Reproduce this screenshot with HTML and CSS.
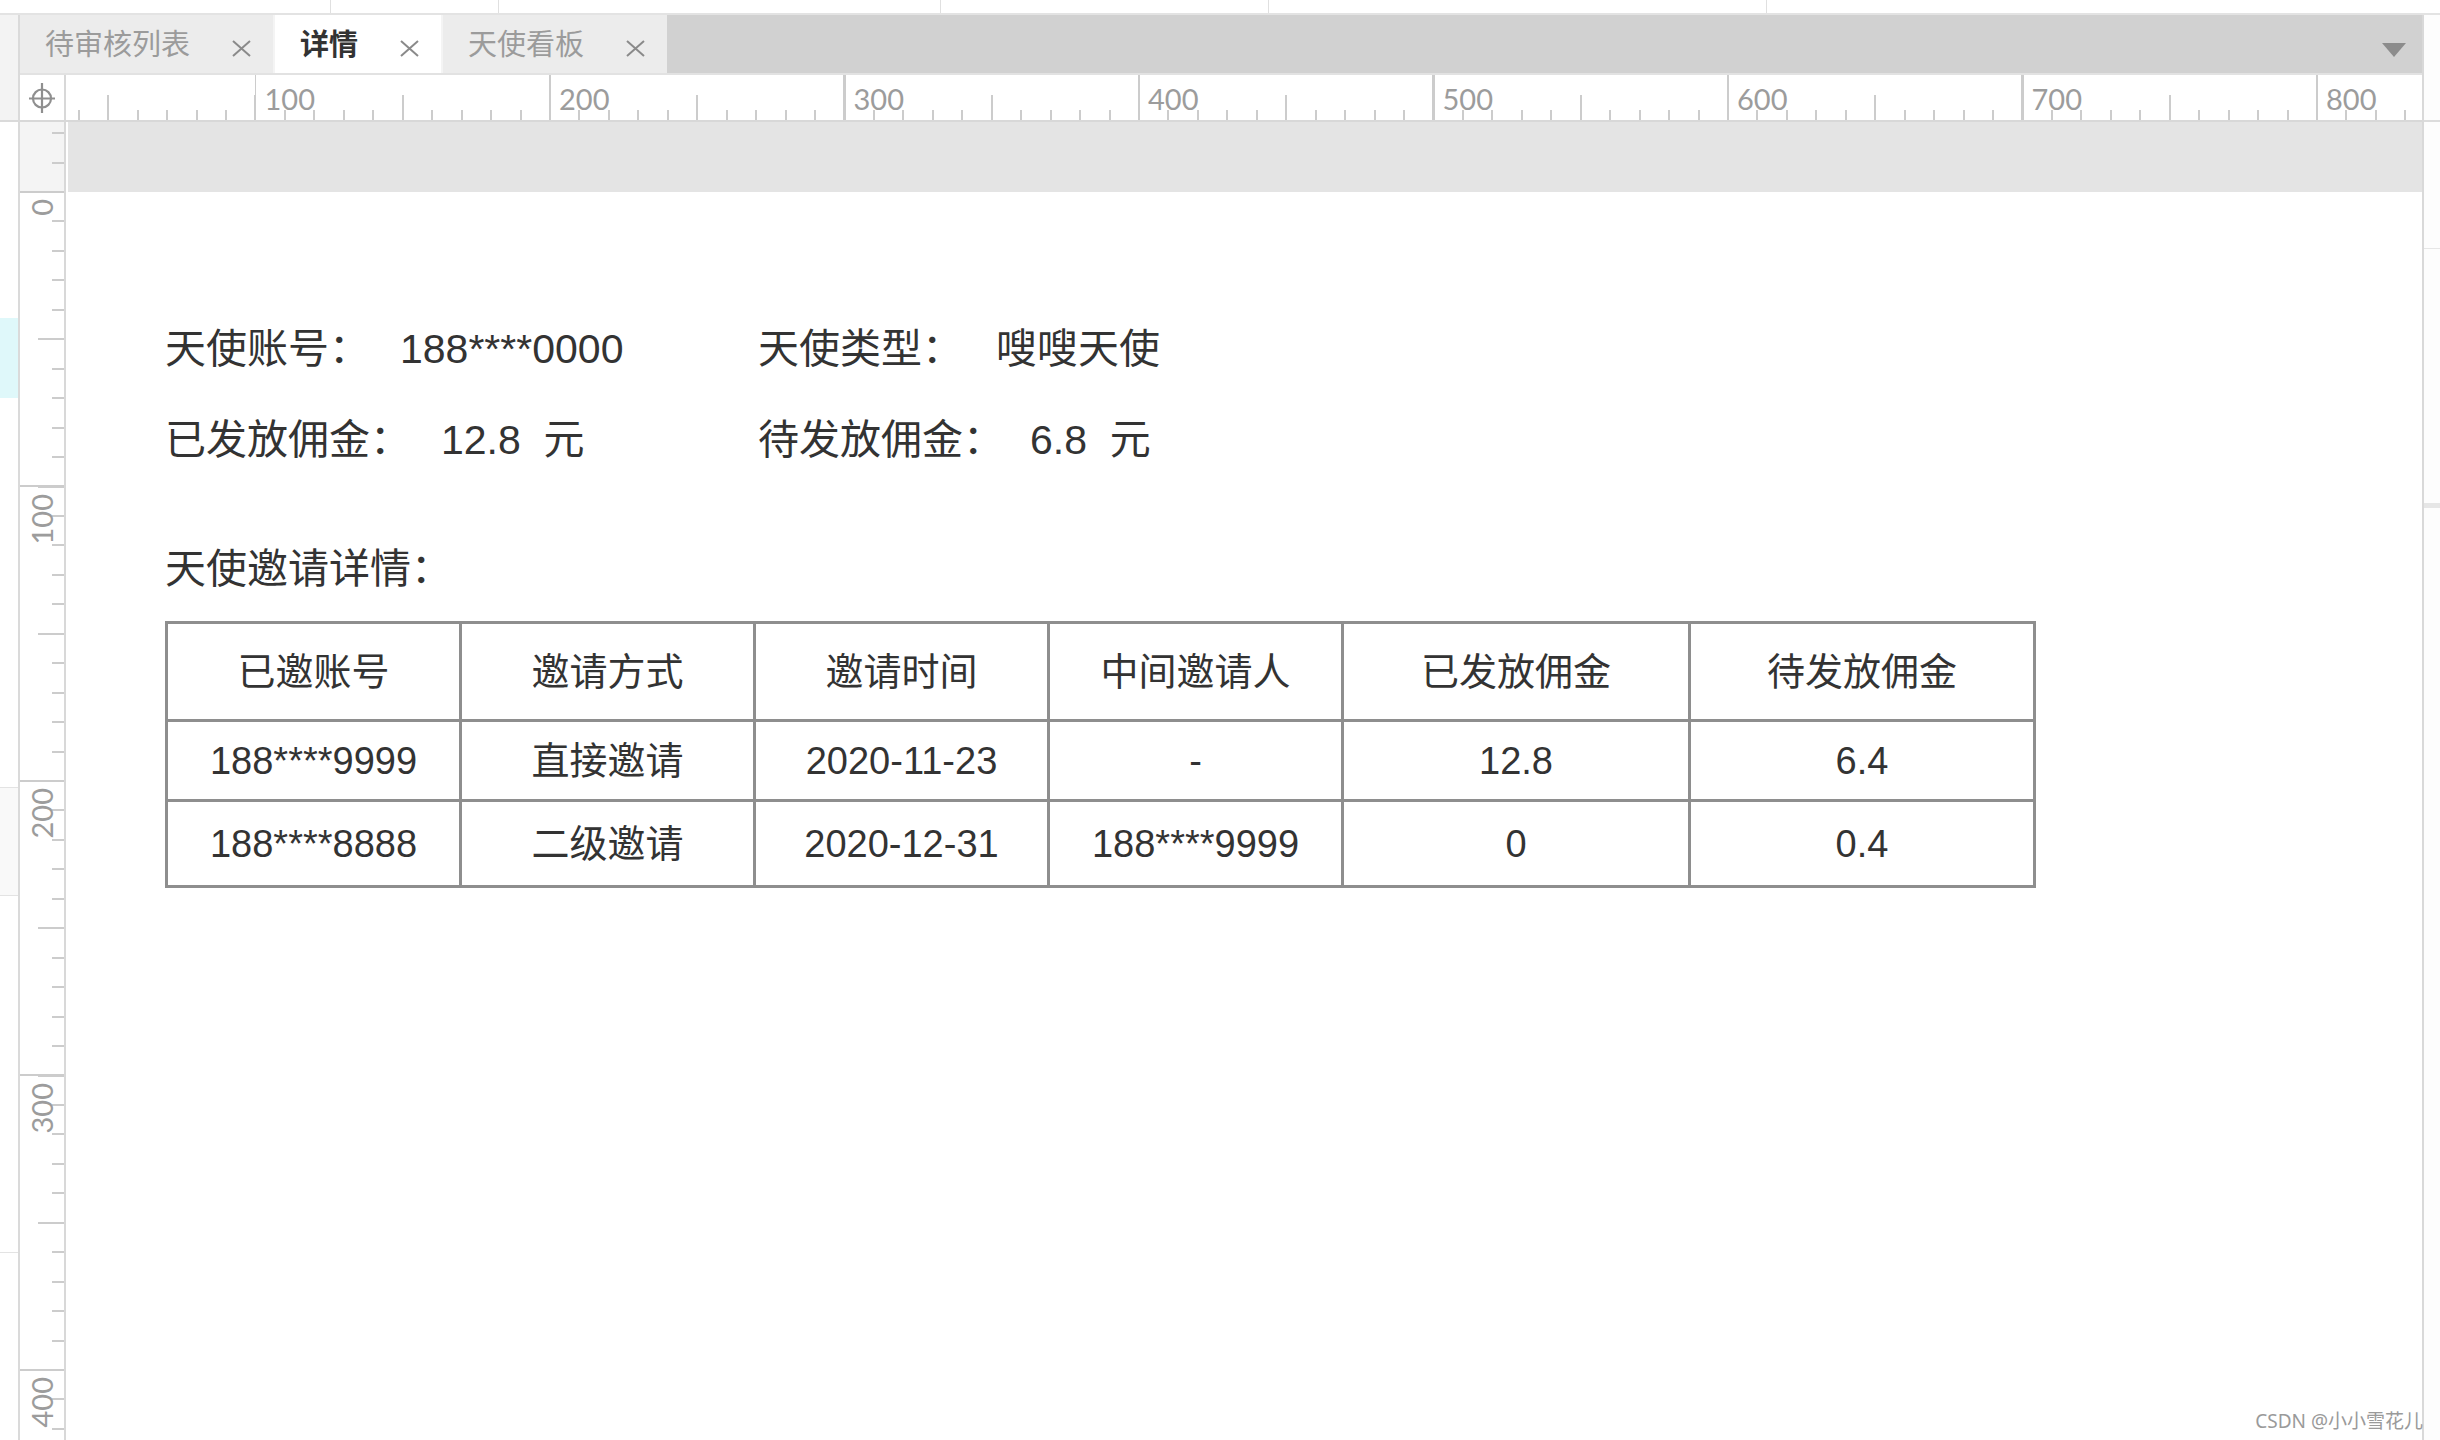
FILE: index.html
```html
<!DOCTYPE html>
<html lang="zh-CN">
<head>
<meta charset="utf-8">
<title>详情</title>
<link rel="stylesheet" href="styles.css">
</head>
<body>
<div class="app">
  <div class="topstrip">
    <span class="seg s1"></span><span class="seg s2"></span><span class="seg s3"></span><span class="seg s4"></span><span class="seg s5"></span>
  </div>
  <div class="main">
    <div class="leftedge">
      <div class="le-top"></div>
      <div class="le-cyan"></div>
      <div class="le-box"></div>
      <div class="le-line"></div>
    </div>
    <div class="center">
      <div class="tabbar">
        <div class="tab">
          <span class="tab-title">待审核列表</span>
          <svg class="tab-close" viewBox="0 0 19 17"><path d="M1 1L18 16M18 1L1 16"/></svg>
        </div>
        <div class="tab active">
          <span class="tab-title">详情</span>
          <svg class="tab-close" viewBox="0 0 19 17"><path d="M1 1L18 16M18 1L1 16"/></svg>
        </div>
        <div class="tab">
          <span class="tab-title">天使看板</span>
          <svg class="tab-close" viewBox="0 0 19 17"><path d="M1 1L18 16M18 1L1 16"/></svg>
        </div>
        <span class="tab-menu"></span>
      </div>
      <div class="rulerrow">
        <div class="corner">
          <svg class="crosshair" viewBox="0 0 44 45">
            <circle cx="22" cy="23.5" r="9"/>
            <path d="M9 23.5H35M22 8V38"/>
          </svg>
        </div>
        <div class="hruler">
          <span class="hl">100</span><span class="hl">200</span><span class="hl">300</span><span class="hl">400</span><span class="hl">500</span><span class="hl">600</span><span class="hl">700</span><span class="hl">800</span>
        </div>
      </div>
      <div class="canvasrow">
        <div class="vruler">
          <div class="vl"><span>0</span></div>
          <div class="vl"><span>100</span></div>
          <div class="vl"><span>200</span></div>
          <div class="vl"><span>300</span></div>
          <div class="vl"><span>400</span></div>
        </div>
        <div class="canvas">
          <div class="band"></div>
          <div class="content">
            <div class="info">
              <div class="field"><span class="label">天使账号：</span><span class="value">188****0000</span></div>
              <div class="field"><span class="label">天使类型：</span><span class="value">嗖嗖天使</span></div>
              <div class="field"><span class="label">已发放佣金：</span><span class="value">12.8  元</span></div>
              <div class="field"><span class="label">待发放佣金：</span><span class="value">6.8  元</span></div>
            </div>
            <div class="section-title">天使邀请详情：</div>
            <table class="invite">
              <colgroup>
                <col class="c1"><col class="c2"><col class="c3"><col class="c4"><col class="c5"><col class="c6">
              </colgroup>
              <tr class="head">
                <td>已邀账号</td><td>邀请方式</td><td>邀请时间</td><td>中间邀请人</td><td>已发放佣金</td><td>待发放佣金</td>
              </tr>
              <tr class="r1">
                <td>188****9999</td><td>直接邀请</td><td>2020-11-23</td><td>-</td><td>12.8</td><td>6.4</td>
              </tr>
              <tr class="r2">
                <td>188****8888</td><td>二级邀请</td><td>2020-12-31</td><td>188****9999</td><td>0</td><td>0.4</td>
              </tr>
            </table>
          </div>
        </div>
      </div>
    </div>
    <div class="rightedge">
      <div class="re-a"></div>
      <div class="re-b"></div>
      <div class="re-c"></div>
    </div>
  </div>
  <div class="watermark">CSDN @小小雪花儿</div>
</div>
</body>
</html>
```
FILE: styles.css
```css
* { box-sizing: border-box; }
html, body { margin: 0; padding: 0; }
body {
  width: 2440px;
  height: 1440px;
  overflow: hidden;
  background: #ffffff;
  font-family: "Liberation Sans", "Noto Sans CJK SC", sans-serif;
  color: #333333;
}
.app {
  position: relative;
  width: 2440px;
  height: 1440px;
  display: flex;
  flex-direction: column;
}

/* top strip */
.topstrip {
  height: 15px;
  flex: none;
  display: flex;
  border-bottom: 2px solid #e3e3e3;
  background: #ffffff;
}
.seg { display: block; height: 100%; border-right: 1px solid #e0e0e0; }
.s1 { width: 331px; }
.s2 { width: 168px; }
.s3 { width: 442px; }
.s4 { width: 328px; }
.s5 { width: 498px; }

.main {
  flex: 1;
  display: flex;
  min-height: 0;
}

/* left edge */
.leftedge {
  width: 20px;
  flex: none;
  border-right: 2px solid #dadada;
  display: flex;
  flex-direction: column;
}
.le-top { height: 107px; background: #f3f3f3; border-bottom: 2px solid #dadada; }
.le-cyan { margin-top: 196px; height: 80px; background: #dff8fa; }
.le-box { margin-top: 389px; height: 109px; background: #f9f9f9; border-top: 1px solid #e3e3e3; border-bottom: 1px solid #e3e3e3; }
.le-line { margin-top: 356px; height: 1px; background: #e3e3e3; }

/* right edge */
.rightedge {
  width: 18px;
  flex: none;
  border-left: 2px solid #d9d9d9;
  display: flex;
  flex-direction: column;
  background: #fdfdfd;
}
.re-a { height: 107px; border-bottom: 2px solid #dcdcdc; }
.re-b { height: 127px; border-bottom: 1px solid #e6e6e6; }
.re-c { margin-top: 254px; height: 5px; background: #e6e6e6; }

.center {
  flex: 1;
  min-width: 0;
  display: flex;
  flex-direction: column;
}

/* tabs */
.tabbar {
  height: 58px;
  flex: none;
  background: #d1d1d1;
  display: flex;
  align-items: stretch;
}
.tab {
  display: flex;
  align-items: center;
  gap: 42px;
  padding: 0 22px 0 25px;
  background: #ececec;
  font-family: "Noto Sans CJK SC", sans-serif;
}
.tab + .tab { border-left: 2px solid #f4f4f4; }
.tab.active { background: #ffffff; }
.tab-title {
  font-size: 29px;
  line-height: 1;
  color: #9b9b9b;
  margin-top: -4px;
}
.tab.active .tab-title { color: #333333; font-weight: 700; }
.tab-close {
  width: 19px;
  height: 17px;
  margin-top: 8px;
  fill: none;
  stroke: #8a8a8a;
  stroke-width: 2;
}
.tab-menu {
  margin-left: auto;
  margin-right: 16px;
  margin-top: 28px;
  align-self: flex-start;
  width: 0;
  height: 0;
  border-left: 12.5px solid transparent;
  border-right: 12.5px solid transparent;
  border-top: 14px solid #8c8c8c;
}

/* rulers */
.rulerrow {
  height: 49px;
  flex: none;
  display: flex;
  border-top: 2px solid #e2e2e2;
  border-bottom: 2px solid #d8d8d8;
  background: #ffffff;
}
.corner {
  width: 46px;
  flex: none;
  border-right: 2px solid #d8d8d8;
}
.crosshair {
  display: block;
  width: 44px;
  height: 45px;
  fill: none;
  stroke: #8f8f8f;
  stroke-width: 2.2;
}
.hruler {
  flex: 1;
  min-width: 0;
  overflow: hidden;
  display: flex;
  padding-left: 188.5px;
  background-image:
    repeating-linear-gradient(to right, #cccccc 188.5px, #cccccc 190.5px, transparent 190.5px, transparent 483px),
    repeating-linear-gradient(to right, #cccccc 41.25px, #cccccc 43.25px, transparent 43.25px, transparent 188.5px),
    repeating-linear-gradient(to right, #cccccc 11.8px, #cccccc 13.8px, transparent 13.8px, transparent 41.25px);
  background-size: 100% 100%, 100% 25px, 100% 10px;
  background-position: left top, left bottom, left bottom;
  background-repeat: no-repeat;
}
.hl {
  flex: none;
  width: 294.5px;
  padding: 9px 0 0 10px;
  font-family: "Lato", sans-serif;
  font-size: 29px;
  line-height: 29px;
  color: #9c9c9c;
}

.canvasrow {
  flex: 1;
  min-height: 0;
  display: flex;
}
.vruler {
  width: 46px;
  flex: none;
  border-right: 2px solid #d8d8d8;
  overflow: hidden;
  padding-top: 77px;
  background-image:
    repeating-linear-gradient(to bottom, #cccccc 69px, #cccccc 71px, transparent 71px, transparent 363.5px),
    repeating-linear-gradient(to bottom, #cccccc 69px, #cccccc 71px, transparent 71px, transparent 216.25px),
    repeating-linear-gradient(to bottom, #cccccc 10.1px, #cccccc 12.1px, transparent 12.1px, transparent 39.55px),
    linear-gradient(#f4f4f4, #f4f4f4);
  background-size: 100% 100%, 26px 100%, 12px 100%, 100% 70px;
  background-position: left top, right top, right top, left top;
  background-repeat: no-repeat;
}
.vl {
  height: 294.5px;
  flex: none;
}
.vl span {
  display: inline-block;
  margin-left: 8px;
  writing-mode: vertical-rl;
  transform: rotate(180deg);
  font-family: "Lato", sans-serif;
  font-size: 29px;
  line-height: 28px;
  color: #9c9c9c;
}

.canvas {
  flex: 1;
  min-width: 0;
  display: flex;
  flex-direction: column;
  background: #ffffff;
}
.band {
  height: 70px;
  flex: none;
  margin-left: 2px;
  background: #e4e4e4;
}
.content {
  padding: 132px 0 0 99px;
}
.info {
  display: grid;
  grid-template-columns: 593px auto;
  row-gap: 41px;
  font-size: 41px;
  line-height: 50px;
  color: #333333;
}
.field {
  display: flex;
  gap: 30px;
  white-space: pre;
}
.field:nth-child(2) .value { margin-left: 3px; }
.field:nth-child(4) .value { margin-left: -4px; }
.section-title {
  margin-top: 79px;
  font-size: 41px;
  line-height: 50px;
  color: #333333;
}
.invite {
  margin-top: 27px;
  border-collapse: collapse;
  table-layout: fixed;
  width: 1868px;
  font-size: 38px;
  line-height: 44px;
  color: #333333;
}
.invite td {
  border: 3px solid #8e8e8e;
  text-align: center;
  vertical-align: middle;
  padding: 0;
  white-space: nowrap;
}
.c1 { width: 294px; }
.c2 { width: 294px; }
.c3 { width: 294px; }
.c4 { width: 294px; }
.c5 { width: 347px; }
.c6 { width: 345px; }
.invite .head { height: 98px; }
.invite .r1 { height: 80px; }
.invite .r2 { height: 86px; }

.watermark {
  position: absolute;
  right: 17px;
  bottom: 8px;
  font-family: "Noto Sans", "Noto Sans CJK SC", sans-serif;
  font-size: 19px;
  line-height: 22px;
  color: #9a9a9a;
}
```
